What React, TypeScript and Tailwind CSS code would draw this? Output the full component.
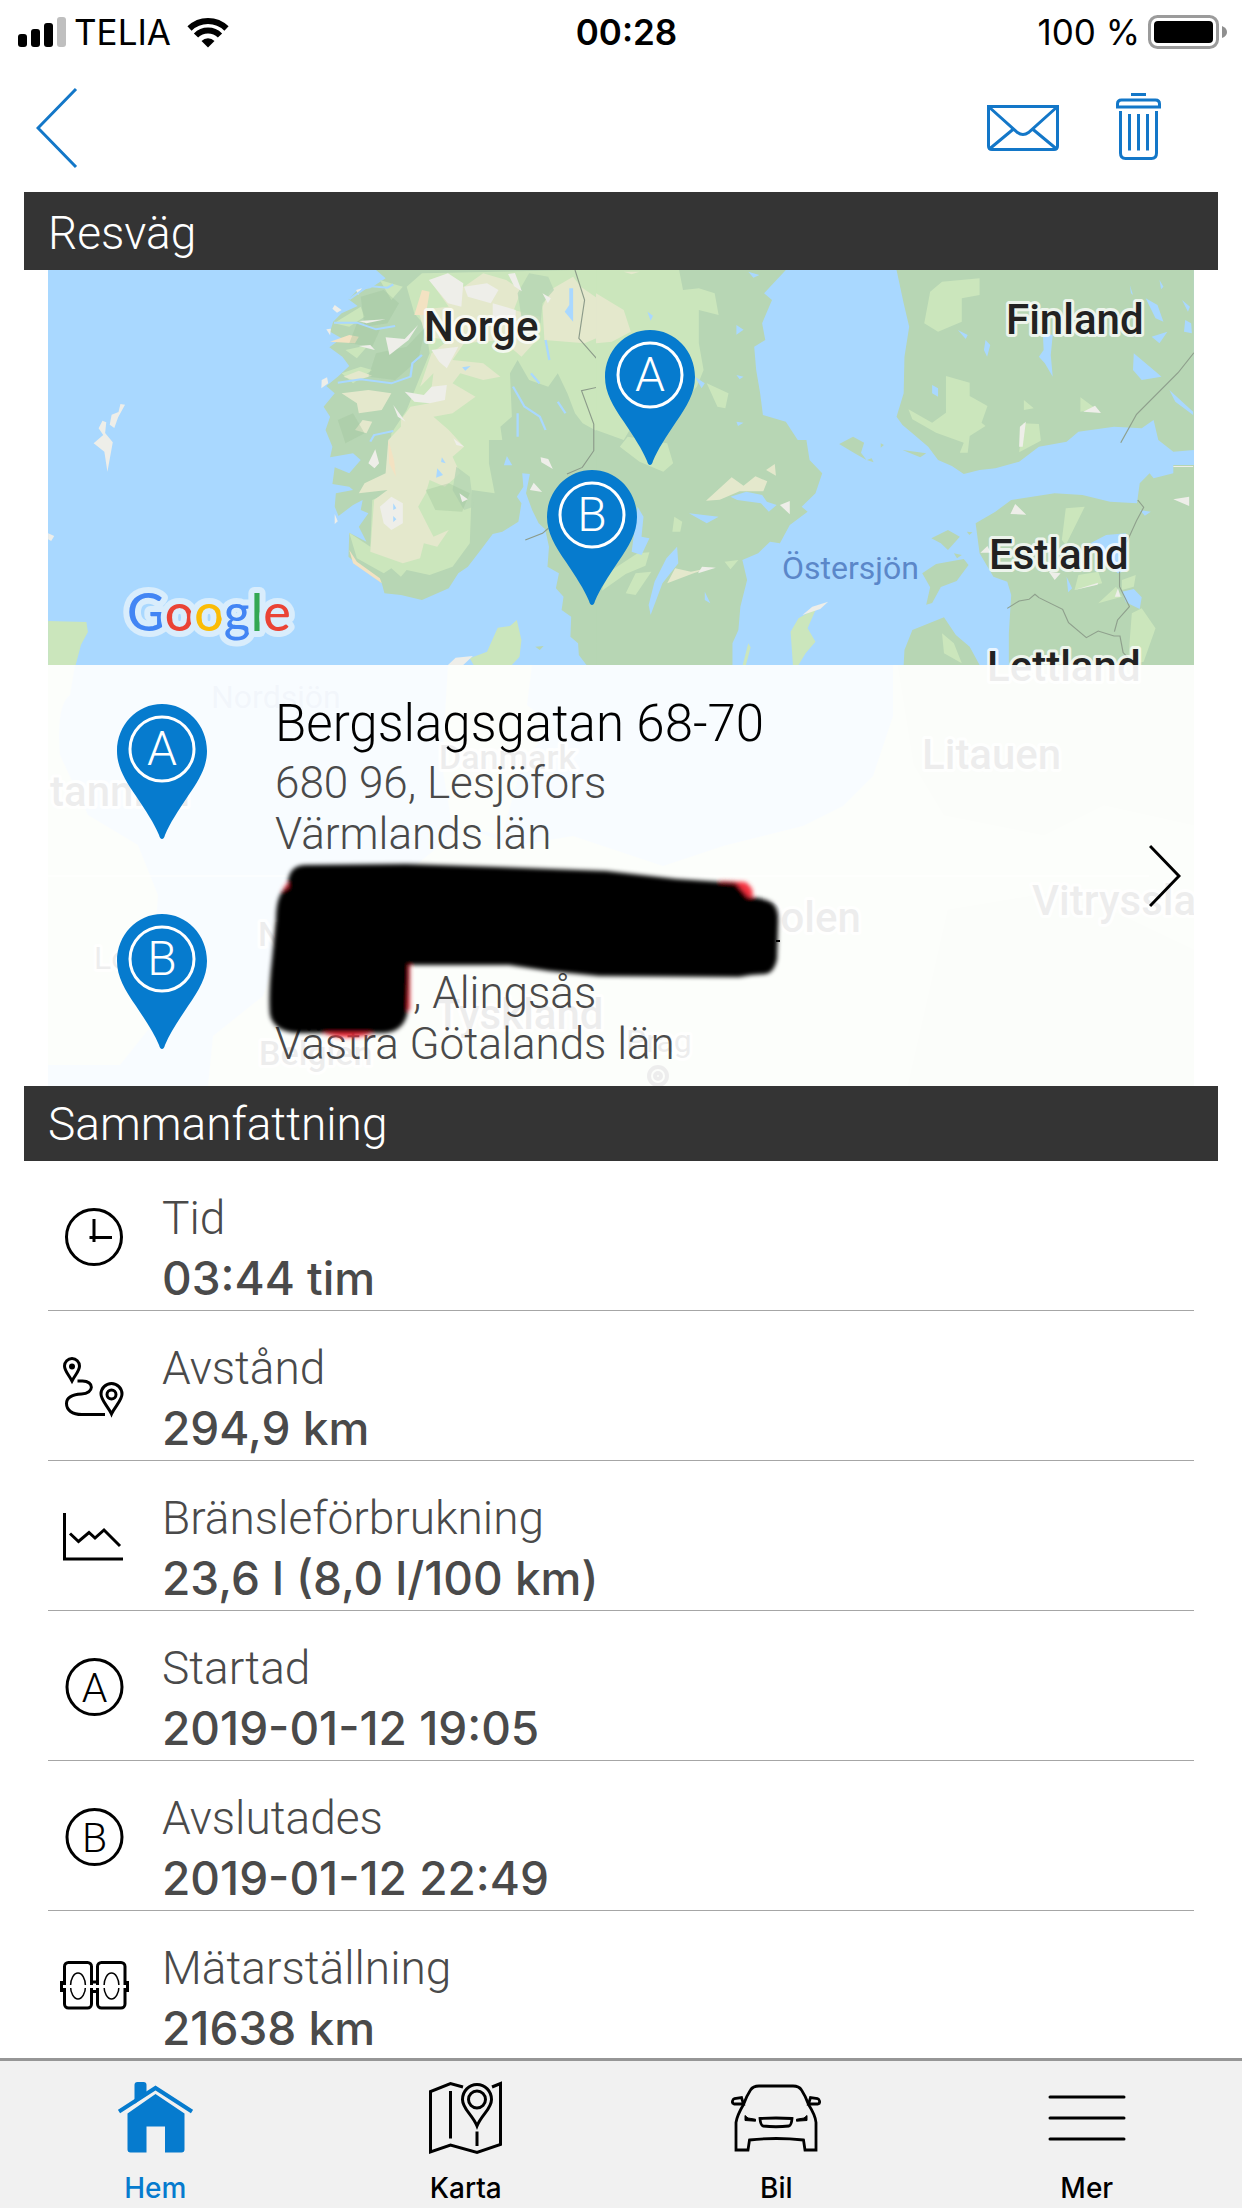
import type { ReactNode } from "react"
import clsx from "clsx"

type IconProps = { className?: string }

const FOREST = "#b7d6b4"
const MEADOW = "#cbe6bc"
const SAND = "#e4e8cc"
const WATER = "#a9d8ff"
const SNOW = "#eeeee9"

/* ---------- status bar ---------- */

function StatusBar() {
  return (
    <div className="grid h-16 grid-cols-3 items-center pr-[15px] pl-[18px] font-['Inter','Liberation_Sans',sans-serif] text-[35px] leading-10 text-black">
      <div className="flex items-center">
        <svg width="48" height="30" viewBox="0 0 48 30">
          <rect x="0" y="17" width="9" height="13" rx="3" />
          <rect x="13" y="12" width="9" height="18" rx="3" />
          <rect x="26" y="6" width="9" height="24" rx="3" />
          <rect x="39" y="0" width="9" height="30" rx="3" fill="#bfbfbf" />
        </svg>
        <span className="ml-2">TELIA</span>
        <svg className="ml-4" width="42" height="31" viewBox="0 0 42 31" fill="none" stroke="#000">
          <path d="M2.500 11.500A26.500 26.500 0 0 1 39.500 11.500" strokeWidth="6" />
          <path d="M9 18.500A17 17 0 0 1 33 18.500" strokeWidth="6" />
          <path d="M21 30.500l-6.500-6.500a9.200 9.200 0 0 1 13 0z" fill="#000" stroke="none" />
        </svg>
      </div>
      <div className="pl-2 text-center font-semibold">00:28</div>
      <div className="flex items-center justify-end gap-2">
        <span>100 %</span>
        <svg width="79" height="34" viewBox="0 0 79 34">
          <rect x="1.500" y="1.500" width="68" height="31" rx="8" fill="none" stroke="#9b9b9b" strokeWidth="3" />
          <rect x="6" y="6" width="59" height="22" rx="4" />
          <path d="M74 11q5 2 5 6t-5 6z" fill="#8f8f8f" />
        </svg>
      </div>
    </div>
  )
}

/* ---------- top bar ---------- */

function TopBar() {
  return (
    <header className="flex h-32 items-center pr-[81px] pl-9 text-[#1377c8]">
      <button type="button" aria-label="Tillbaka" className="mr-auto">
        <svg width="42" height="82" viewBox="0 0 42 82" fill="none" stroke="currentColor" strokeWidth="3">
          <path d="M40 2L2 41l38 39" />
        </svg>
      </button>
      <button type="button" aria-label="Skicka" className="mr-[57px]">
        <svg width="72" height="46" viewBox="0 0 72 46" fill="none" stroke="currentColor" strokeWidth="3">
          <path d="M1.500 1.500h69V41q0 3.500-3.500 3.500H5q-3.500 0-3.500-3.500z" />
          <path d="M2 2l28.500 25.500q5.500 4 11 0L70 2M26.500 24L3 43.500M45.500 24L69 43.500" />
        </svg>
      </button>
      <button type="button" aria-label="Ta bort">
        <svg width="45" height="72" viewBox="0 0 45 72" fill="none" stroke="currentColor" strokeWidth="3">
          <path d="M15 2.500h15M1.500 15V12q0-4 4-4h34q4 0 4 4v3z" />
          <path d="M4.500 19v42q0 5.500 5 5.500h26q5 0 5-5.500V19M13.500 22v36.500M22.500 22v36.500M31.500 22v36.500" />
        </svg>
      </button>
    </header>
  )
}

function SectionTitle({ children, className }: { children: ReactNode; className?: string }) {
  return (
    <h2 className={clsx("bg-[#343434] px-6 pb-[9px] text-[46px] leading-[56px] font-light text-white", className)}>
      {children}
    </h2>
  )
}

/* ---------- map ---------- */

function PinShape({ letter }: { letter: string }) {
  return (
    <>
      <path
        d="M45 0C20 0 0 21 0 47c0 16 8 29 19 45 10 15 18 27 23 39q1 4 3 4t3-4c5-12 13-24 23-39 11-16 19-29 19-45C90 21 70 0 45 0z"
        fill="#067bce"
      />
      <circle cx="45" cy="45" r="32" fill="none" stroke="#fff" strokeWidth="3" />
      <text x="45" y="61" textAnchor="middle" fontSize="48" fontWeight="300" fill="#fff">
        {letter}
      </text>
    </>
  )
}

function Map({ className }: IconProps) {
  return (
    <svg className={className} viewBox="0 0 1146 816" preserveAspectRatio="xMinYMin slice" aria-hidden="true">
      <rect width="1146" height="816" fill={WATER} />

      {/* Norway and the west of Sweden */}
      <g transform="translate(-24 -10) scale(0.38265 0.33333)">
        <path
          fill={FOREST}
          d="M920 30L945 55 905 85 870 92 848 118 872 138 830 160 808 185 800 215 830 235 798 262 832 290 850 318 820 350 790 378 812 400 783 440 800 470 788 510 806 560 800 592 860 580 880 600 850 640 812 622 806 672 850 680 860 690 815 700 812 740 822 768 860 735 885 720 880 750 900 760 875 800 895 845 850 818 848 890 870 912 935 970 942 1000 985 1005 1040 1020 1110 985 1135 940 1160 920 1200 860 1225 822 1250 815 1292 785 1300 730 1288 710 1305 680 1302 640 1322 642 1312 700 1328 750 1345 790 1362 808 1372 860 1368 920 1398 940 1390 985 1410 1010 1405 1050 1430 1070 1428 1130 1448 1150 1450 1185 1470 1215H1560V30z"
        />
        <path
          fill={MEADOW}
          d="M1040 40L1440 30 1560 30V530L1500 515 1460 490 1440 460 1420 400 1395 340 1370 380 1320 360 1290 300 1270 340 1275 470 1245 500 1250 540 1215 540 1215 610 1230 700 1170 690 1165 850 1120 920 1060 945 1000 930 985 950 960 925 940 940 870 895 850 818 905 860 910 720 950 700 960 520 1000 450 1060 280 1050 200 1020 160 1000 80z"
        />
        <path fill={MEADOW} d="M810 190l70-50 10 30-40 30zM840 270l60-15-30 40zM830 340l50-20 30 10-50 40zM930 60l60 20-30 40z" />
        <path
          fill={SAND}
          d="M985 480L1010 440 1060 430 1070 340 1035 380 1065 280 1110 240 1050 230 1030 150 1110 140 1060 60 1150 80 1200 40 1260 60 1300 90 1280 150 1350 170 1340 240 1300 290 1250 240 1150 250 1120 300 1200 310 1245 350 1200 360 1140 340 1120 370 1180 410 1120 460 1070 470 1110 510 1150 560 1120 590 1140 640 1100 680 1060 660 1050 700 1030 740 1070 830 1110 810 1080 860 1045 850 1035 895 990 910 905 875 915 720 950 690 875 700 890 670 945 640 952 540 985 500zM1360 240l-5-100 20-50 60-40 20 30 50 40 60 60v80l-60-30-40 20z"
        />
        <path fill={SAND} d="M830 400l70-10 60 10-25 50-60 10-5-30zM865 510l20-30 25 5-15 35zM835 350l40-18 35 15-45 15z" />
        <path fill={FOREST} d="M1290 100l30-60 50 10 15 40-30 40-5 60-50-20zM1130 620l35 30 10 90-25 10-30-60z" opacity="0.8" />
        <path fill="#f3e2c2" d="M1020 165l20-75 20 5-10 70zM800 245l50-20 25 5-10 20zM952 540l15 60 5 50-18-40zM850 870l20 35 60 50 5 15-75-60z" />
        <path fill="#9fc29a" opacity="0.35" d="M880 110l60-20 40 40-30 60-60 10zM870 190l60 20-20 50-60-10zM920 280l80-20 50-60-20 100-60 60-70-10zM1050 690l60-20 55 30-20 55-70-5zM820 480l40-20 30 60-50 30z" />
        <path
          fill={SNOW}
          d="M1058 60l50-20 40 30-5 70-35-10zM1150 80l60-10 30 20-20 40-60-20zM1265 42l18-3 18 55-20-15zM1225 130l60 20 0 50-60-20zM945 232l50 5 35-42-25 45-50 45zM1065 270l70-10-30 65-20-20zM995 395l50 10 20-25 40-5-5 45-40 10-40-5zM965 435l32 50-20-15zM900 610l18-42 10 42-12 15zM1122 535l28 25-20-5zM1350 592l20 5 12 30-30-20zM1322 690l10-22 22 28zM1355 100l22 15-8 15zM1138 700l22 18-15 8zM875 183l70-5-50 12zM875 258l30-3 12 15zM930 740l30-30 30 20 0 60-30 20-20-20zM812 135l18 15-12 8-12-12zM868 90l15-5-10 20zM778 360l14-8 3 18-18 15zM812 762l8 22-8 8zM790 208l12-2-2 20z"
        />
        <g fill="none" stroke={WATER} strokeWidth="6">
          <path d="M850 118l50-40 50 5 15-10M810 188h60l50 20 50-10M820 368l60-10 80 12 50-20 5-40 25-25M905 545l10-20 50-12" />
          <path d="M1325 340l22 30M1278 380l30 60 40 30 15 40M1395 425l20 35M1290 460v70M1363 240l10 60" />
        </g>
        <path fill={WATER} d="M1425 85h10v100l-22-30 12-20zM1080 625l15 20-18 8zM1092 592l10 18-12-4zM1262 588l14 28h-22zM965 730l8 15-8 5zM965 768l8 10-8 8zM1145 322l22-4-14 14z" />
        <path fill="none" stroke="#8c9b8a" strokeWidth="3" d="M1440 30l25 90-15 115 65 85-10 60-48 12 32 100v80l-30 50-40 20M1310 840l45-20 15-15" />

        {/* Shetland, Orkney, Scotland */}
        <path fill={SNOW} d="M252 432l12 2-18 38-10 32-12-10 5-30 18-8zM205 482l10 5-3 32 20 28-14 88-8-60-28-25 25-25-12-20zM63 820l16 8-8 15-8-5z" />
        <path fill={MEADOW} d="M63 1083l100 3 4 30-18 38-14 61H63z" />

        {/* Jutland */}
        <path fill={MEADOW} d="M1165 1195l45-20 28-72 32-5 18-18 12 60-5 50-20 25h-100z" />
        <path fill={SNOW} d="M1108 1215l20-22 45-5-25 27z" />
        <path fill={FOREST} d="M1336 1160l22-2-10 12z" />
      </g>

      {/* Sweden, Finland and the Baltic states */}
      <g transform="translate(552 -10) scale(0.3954 0.33333)">
        <path
          fill={FOREST}
          d="M-10 30H470L415 100 435 120 410 190 418 240 390 260 395 330 405 400 412 465 470 485 500 540 522 540 530 600 562 640 545 700 510 740 525 755 480 795 455 850 430 845 400 880 360 900 372 960 355 1040 350 1110 335 1150V1215H-10z"
        />
        <path
          fill={FOREST}
          d="M750 30L768 130 782 200 770 290 768 400 750 470 765 495 790 520 830 560 855 600 890 618 920 642 960 630 1000 625 1060 605 1110 560 1180 545 1210 515 1300 500 1370 505 1400 480 1412 540 1450 575 1502 570V30z"
        />
        <path
          fill={FOREST}
          d="M950 790L1000 755 1040 720 1150 700 1220 705 1290 725 1358 730 1365 670 1390 640 1400 655 1450 640V615H1510V1215H768L770 1170 790 1110 870 1072 900 1125 935 1160 960 1215H1034V1120L1040 1005 1030 965 995 950 960 880z"
        />
        <path fill={MEADOW} d="M-10 30H200L210 90 250 85 290 100 300 165 250 150 250 250 262 330 245 380 230 400 200 450 120 420 60 540-10 510zM270 370l55 30-8 45-20-5zM50 560l20-30 100 20 15 60-25 25-60-30zM835 95l30-30 95-10v50l-45 10v70l-60 30-35-25zM875 348l60 20v40l45 30-15 50 10 10-40 30-5 50h-20l10-30-70-30-60-40-10-30 60 40 35-30zM1070 490l40 2 5 50-55 35zM1215 412l40 35-40 8zM1072 420l25 25-25 5zM1178 745l48-5-48 115-10-15z" />
        <path fill={MEADOW} d="M188 770l20 15-5 30h-20zM95 880l30-3-10 40-50 25-60 50 10-50zM90 940l40-5-40 70-25-5zM315 905l35-5-20 28zM1210 945l50-10 10 35-70 20zM1260 1030l45-50 15 30zM1345 1060l25-15 35 60-30 100-40 10zM865 1120l30 30 20 60-45-30zM1320 960l35-15-5 35-30 10z" />
        <path fill={SAND} d="M-10 100L60 150 78 215 30 245-10 250zM268 722l65-70 30 25 30-28 30 15-10 30-60 0-50 25zM420 630l22-18 3 35zM170 970l20-45 40 10 60-15-50 18zM60 35h40l-20 8z" />
        <path fill={SNOW} d="M455 735l25-12v40zM248 940l10-20 35 3zM1038 762l12-30 28 32zM1222 455l30-18 15 22zM1060 560l2-60 15-15-8 75zM1450 718l40-8v28zM962 878l18-20 8 20zM1135 935l30 5-15 20zM1200 990l60-22-2 6zM1302 1010l8-25 6 25zM1450 618h50v3h-50z" />
        <path fill={WATER} d="M195 860l3 50-40 60-30 95-5-30 15-70 30-70zM95 740l15 30-5 60 20 5-20 50-25-10zM1240 850l40-25 50-5 5 110-25 10-40-40zM1320 995l30-8 20 25-5 35-35-20zM1350 280l60 60 10 10-50 10-22-30zM1120 220l25 5-5 60 5 65-20-40-15-20 12-20zM1380 115l30 20 15 50-20-10zM1472 120l20 20-5 15zM1480 180l15 10 2 30-20-5zM975 240l12 15-8 35-8-20zM840 375l15 10v25l-15-10zM225 760l75 10-30 20zM120 155l14 12-6 15zM240 350l25 20-8 15zM1180 950l14 35-10 12zM345 195l18 14-18 15zM345 345l18 5-10 8zM345 485l18 3-14 10zM375 35l28 10-15 8zM1395 230l40-15-20 35zM265 995l14 35-14-10zM905 210l25 15-5 12zM1415 60l10 20-6 8zM1340 75l8 30-5-5zM1365 750l28 5-15 12zM330 710l40-15 40 10 12 20 25 10-20 20-20-25-60-10zM1440 390l60 65v10l-45-40z" />
        <path fill={FOREST} d="M605 552l35-22 28 18-8 30 14 22-30-20zM675 600l12-5 5 12zM710 550l8 5-8 8zM765 570l60 10-15 12zM838 835l42-25 30 20-30 40-18-20zM815 940l35-28 70-15 12 18-30 48-40 18-22 48-15 5 10-52zM928 815l14 2-8 8zM895 880l20 5-12 10z" />
        <path fill={MEADOW} d="M482 1115l20-40 45-30-22 60 20 40-25 35-18 35h-14zM375 1150l6 12-12 53h-8z" />
        <path fill={SNOW} d="M512 1065l25-25 40-15-20 22z" />
        <g fill="none" stroke="#8fa08d" strokeWidth="3">
          <path d="M1502 278l-40 60-105 125-40 85M1360 720l15 22-18 40-25 65M1314 935v45l25 60-30 40-8 35M1030 1045l30-22 25-5 15-15 10 10 60 35 15 40 45 45 30-20 40 15 15 0 8 50 20 25" />
        </g>
      </g>

      {/* Great Britain, Denmark and the continent, under the trip panel */}
      <g fill="#d6e8c6">
        <path d="M0 395h27l-5 30q-14 10-10 60l28 60 50 30 20 50-4 60-24 40 30 20-40 50H0z" />
        <path d="M400 395h84l-5 40 25 20-30 40-20 70-50-10-10-60z" />
        <path d="M160 816l5-50 50-40 20-60 30-30 90-30 60-50 50 20 60-10 90 30 60-20 80-20 40-20 30-30 20-60V395h306v421z" />
      </g>
      <path fill={FOREST} opacity="0.6" d="M850 395h296v160l-90-20-60 30-100-20-30-50zM900 640l120-20 126 60v136H860z" />

      <g
        fontFamily="Roboto, 'Liberation Sans', sans-serif"
        fontWeight="500"
        fill="#222"
        stroke="#fff"
        strokeOpacity="0.75"
        strokeWidth="6"
        strokeLinejoin="round"
        paintOrder="stroke"
      >
        <g fontSize="42">
          <text x="376" y="71">Norge</text>
          <text x="958" y="64">Finland</text>
          <text x="941" y="299">Estland</text>
          <text x="939" y="411">Lettland</text>
          <text x="2" y="536">tannien</text>
          <text x="874" y="499">Litauen</text>
          <text x="984" y="645">Vitryssland</text>
          <text x="706" y="662">Polen</text>
          <text x="387" y="759">Tyskland</text>
        </g>
        <g fontSize="34">
          <text x="391" y="499">Danmark</text>
          <text x="210" y="676">Nederländerna</text>
          <text x="211" y="795">Belgien</text>
        </g>
        <g fontSize="32" fontWeight="400">
          <text x="46" y="699">London</text>
          <text x="578" y="782">Prag</text>
        </g>
      </g>
      <g fill="none" stroke="#222" strokeWidth="4">
        <circle cx="610" cy="806" r="9" />
        <circle cx="610" cy="806" r="3" />
      </g>
      <g fontFamily="Roboto, 'Liberation Sans', sans-serif" fontSize="32" fill="#5b87c9">
        <text x="734" y="309">Östersjön</text>
        <text x="163" y="438">Nordsjön</text>
      </g>

      <text
        x="79"
        y="361"
        fontFamily="Lato, sans-serif"
        fontSize="52"
        fontWeight="500"
        stroke="#d9edfc"
        strokeWidth="12"
        strokeLinejoin="round"
        paintOrder="stroke"
      >
        <tspan fill="#4285f4">G</tspan>
        <tspan fill="#ea4335">o</tspan>
        <tspan fill="#fbbc05">o</tspan>
        <tspan fill="#4285f4">g</tspan>
        <tspan fill="#34a853">l</tspan>
        <tspan fill="#ea4335">e</tspan>
      </text>

      <g transform="translate(557 60)">
        <PinShape letter="A" />
      </g>
      <g transform="translate(499 200)">
        <PinShape letter="B" />
      </g>
    </svg>
  )
}

function ListPin({ letter }: { letter: string }) {
  return (
    <svg className="mt-[10px] shrink-0" width="90" height="136" viewBox="0 0 90 136">
      <PinShape letter={letter} />
    </svg>
  )
}

/* marker strokes over the street and postcode */
function Scribble({ className }: IconProps) {
  return (
    <svg className={className} width="520" height="180" viewBox="269 862 520 180" overflow="visible" aria-hidden="true">
      <defs>
        <filter id="soft" x="-10%" y="-10%" width="120%" height="120%">
          <feGaussianBlur stdDeviation="2" />
        </filter>
      </defs>
      <g filter="url(#soft)">
        <path fill="#f5333f" d="M279 905q2-24 18-28l30-5v60l-52 60q-4-50 4-87zM720 880l25 1q8 4 8 14l-20 10zM405 955h20v9h-15v45h-7zM320 1020h60q0 14-24 16t-36-6z" />
        <path d="M288 880q2-16 18-16l100-1 90 3 110 4 70 8 60 4 12 14q20 1 26 8 5 6 4 20l-1 34q-3 14-12 15l-14 1-12 2-140-1-50-5-40-6-100 0-1 40q0 26-24 28l-88 0q-22-2-26-18-2-20 2-55l4-40q0-28 12-33z" />
      </g>
      <path d="M776 940h4" stroke="#000" strokeWidth="2" />
    </svg>
  )
}

function TripMap() {
  return (
    <a href="#karta" className="relative mx-6 block overflow-hidden pt-[395px]">
      <Map className="absolute inset-0 h-full w-full" />
      <div className="relative flex items-center bg-white/92 pr-[13px]">
        <div className="grow">
          <div className="flex gap-[68px] pt-[29px] pb-[15px] pl-[69px]">
            <ListPin letter="A" />
            <div className="text-[44px] leading-[51px] font-light text-[#4a4a4a]">
              <p className="mb-1 text-[51px] leading-[60px] text-black">Bergslagsgatan 68-70</p>
              <p>680 96, Lesjöfors</p>
              <p>Värmlands län</p>
            </div>
          </div>
          <div className="relative flex gap-[68px] border-t-2 border-white/60 pt-[27px] pb-4 pl-[69px]">
            <ListPin letter="B" />
            <div className="pt-16 text-[44px] leading-[51px] font-light text-[#4a4a4a]">
              <p className="pl-[138px]">, Alingsås</p>
              <p>Västra Götalands län</p>
            </div>
            <Scribble className="absolute -top-[14px] left-[221px]" />
          </div>
        </div>
        <svg width="32" height="64" viewBox="0 0 32 64" fill="none" stroke="#000" strokeWidth="3">
          <path d="M1 2l29 30L1 62" />
        </svg>
      </div>
    </a>
  )
}

/* ---------- summary ---------- */

function RowIcon({ children }: { children: ReactNode }) {
  return (
    <svg
      className="mr-8 ml-[10px] shrink-0"
      width="72"
      height="60"
      viewBox="0 0 72 60"
      fill="none"
      stroke="#000"
      strokeWidth="3"
      overflow="visible"
      aria-hidden="true"
    >
      {children}
    </svg>
  )
}

function LetterIcon({ letter }: { letter: string }) {
  return (
    <RowIcon>
      <circle cx="36.500" cy="31" r="27.500" />
      <text x="36.500" y="45.500" textAnchor="middle" fontSize="41" fontWeight="300" fill="#000" stroke="none">
        {letter}
      </text>
    </RowIcon>
  )
}

const ClockIcon = (
  <RowIcon>
    <circle cx="36" cy="31" r="27.500" />
    <path d="M36 13v23M31.500 31.500h22.500" />
  </RowIcon>
)

const DistanceIcon = (
  <RowIcon>
    <path d="M14 25C11 19 6.500 15 6.500 10a7.500 7.500 0 0 1 15 0c0 5-4.500 9-7.500 15z" />
    <circle cx="14" cy="10.500" r="3" fill="#000" stroke="none" />
    <path d="M19.500 25h5c12 0 12 12.500-1 13-9 .5-15 3-15 9.500C8.500 54 14 58.500 24 58.500h23" />
    <path d="M53.500 58C50 50 43 44.500 43 38a10.500 10.500 0 0 1 21 0c0 6.500-7 12-10.500 20z" />
    <circle cx="53.500" cy="38.500" r="4.500" />
  </RowIcon>
)

const ChartIcon = (
  <RowIcon>
    <path d="M6.500 7v46H65M12 27.500l8.500 8 10.500-9 6 5.500 9-8L62 40" />
  </RowIcon>
)

const OdometerIcon = (
  <RowIcon>
    <rect x="6.500" y="7.500" width="27" height="45.500" rx="4" />
    <rect x="39.500" y="7.500" width="27.500" height="45.500" rx="4" />
    <path d="M34 27h5.500M34 36.500h5.500M6 27.500H3.500v8H6M67 27.500h2.500v8H67" />
    <g strokeWidth="1.500">
      <ellipse cx="20" cy="31" rx="7.500" ry="13" />
      <ellipse cx="53.500" cy="31" rx="7.500" ry="13" />
    </g>
    <path d="M5 31.500h63" stroke="#fff" />
  </RowIcon>
)

const rows = [
  { icon: ClockIcon, label: "Tid", value: "03:44 tim" },
  { icon: DistanceIcon, label: "Avstånd", value: "294,9 km" },
  { icon: ChartIcon, label: "Bränsleförbrukning", value: "23,6 l (8,0 l/100 km)" },
  { icon: <LetterIcon letter="A" />, label: "Startad", value: "2019-01-12 19:05" },
  { icon: <LetterIcon letter="B" />, label: "Avslutades", value: "2019-01-12 22:49" },
  { icon: OdometerIcon, label: "Mätarställning", value: "21638 km" },
]

function Summary() {
  return (
    <dl className="mx-6">
      {rows.map((row) => (
        <div key={row.label} className="flex items-center border-b border-[#a6a6a6] last:border-b-0 last:[&>div]:pb-0">
          {row.icon}
          <div className="pt-[27px] pb-[2px] leading-[60px] text-[#4a4a4a]">
            <dt className="text-[46px] font-light">{row.label}</dt>
            <dd className="font-['Inter','Liberation_Sans',sans-serif] text-[46px] font-medium">{row.value}</dd>
          </div>
        </div>
      ))}
    </dl>
  )
}

/* ---------- tab bar ---------- */

const tabs = [
  {
    label: "Hem",
    href: "#hem",
    active: true,
    icon: (
      <svg width="75" height="72" viewBox="0 0 75 72" fill="currentColor">
        <path d="M16.500 23V4q0-3 3-3h6q3 0 3 3v9.500z" />
        <path d="M1 30.500L37.500 7 74 30.500" fill="none" stroke="currentColor" strokeWidth="4" />
        <path d="M9.500 32.500L37.500 13 66.500 32.500V68.500q0 3-3 3H47v-26H28.500v26h-16q-3 0-3-3z" />
      </svg>
    ),
  },
  {
    label: "Karta",
    href: "#karta",
    icon: (
      <svg width="73" height="74" viewBox="0 0 73 74" className="-mb-[2px]" fill="none" stroke="currentColor" strokeWidth="3">
        <path d="M34 6L21.500 2.500 1.500 10.500V71l20-7 26.500 7.500 23.500-8V2.500L63 6M21.500 10v47.500M48 50.500V65" />
        <path d="M48 45C43 33 33.500 28 33.500 18.500a14.500 15 0 0 1 29 0C62.500 28 53 33 48 45z" />
        <circle cx="48" cy="18.500" r="8.500" />
      </svg>
    ),
  },
  {
    label: "Bil",
    href: "#bil",
    icon: (
      <svg width="90" height="72" viewBox="0 0 90 72" fill="none" stroke="currentColor" strokeWidth="2.800">
        <path d="M28 5h34q6 0 8.500 4 4 6 7 14.500 7 11 7.500 18V69H74l-1.500-10q-27.500-3-54 0L17 69H5V41.500q1-7 7.500-18Q15.500 15 19.500 9 22 5 28 5z" />
        <path d="M12.500 23H3q-2-.5-1.500-3 .5-2 2-2.500l7-1zM77.500 23H87q2-.5 1.500-3-.5-2-2-2.500l-7-1z" />
        <path d="M29 37.500q16-1 32 0-.5 6.500-3 7.500-13 1.500-26 0-2.500-1-3-7.500z" />
        <path d="M14 34.500l3 2.500 7.500 1.200v2L14 39.500zM76 34.500l-3 2.500-7.500 1.200v2l10.500-.7z" fill="currentColor" strokeWidth="1" />
      </svg>
    ),
  },
  {
    label: "Mer",
    href: "#mer",
    icon: (
      <svg width="78" height="72" viewBox="0 0 78 72" fill="none" stroke="currentColor" strokeWidth="3" strokeLinecap="round">
        <path d="M2 16h74M2 37h74M2 58h74" />
      </svg>
    ),
  },
]

function TabBar() {
  return (
    <nav className="mt-auto grid grid-cols-4 border-t-3 border-[#969696] bg-[#f1f1f1]">
      {tabs.map((tab) => (
        <a
          key={tab.label}
          href={tab.href}
          className={clsx(
            "flex flex-col items-center gap-[15px] pt-5 font-['Inter','Liberation_Sans',sans-serif] text-[28px] leading-10 font-medium",
            tab.active ? "text-[#067bce]" : "text-black",
          )}
        >
          {tab.icon}
          {tab.label}
        </a>
      ))}
    </nav>
  )
}

export default function App() {
  return (
    <div className="flex min-h-screen flex-col bg-white font-['Roboto','Liberation_Sans',sans-serif]">
      <StatusBar />
      <TopBar />
      <main className="mx-6">
        <SectionTitle className="pt-[13px]">Resväg</SectionTitle>
        <TripMap />
        <SectionTitle className="pt-[10px]">Sammanfattning</SectionTitle>
        <Summary />
      </main>
      <TabBar />
    </div>
  )
}
